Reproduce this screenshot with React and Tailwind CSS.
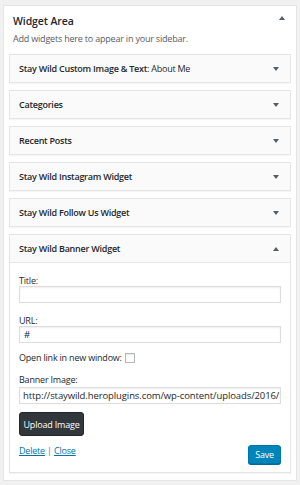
const widgets = [
  { title: 'Stay Wild Custom Image & Text', sub: 'About Me' },
  { title: 'Categories' },
  { title: 'Recent Posts' },
  { title: 'Stay Wild Instagram Widget' },
  { title: 'Stay Wild Follow Us Widget' },
];

function Arrow({ up }) {
  return (
    <svg width="6" height="4" viewBox="0 0 6 4" className="shrink-0">
      {up ? <path d="M0 4 L3 0 L6 4 Z" fill="#555d66" /> : <path d="M0 0 L6 0 L3 4 Z" fill="#555d66" />}
    </svg>
  );
}

function WidgetHeader({ title, sub, up }) {
  return (
    <div className="h-[27px] flex items-center justify-between pl-[9px] pr-[11px] bg-[#fafafa]">
      <span className="text-[9px] tracking-[-0.24px] font-semibold text-[#23282d] leading-none whitespace-nowrap">
        {title}
        {sub && <span className="font-normal">: {sub}</span>}
      </span>
      <Arrow up={up} />
    </div>
  );
}

export default function App() {
  return (
    <div
      className="w-[300px] h-[485px] bg-[#f1f1f1] pt-[5px] pl-[3px]"
      style={{ fontFamily: '"Open Sans", "Liberation Sans", sans-serif' }}
    >
      <div className="w-[294px] h-[476px] bg-white border border-[#e5e5e5] px-[5px]">
        {/* Sidebar header */}
        <div className="flex items-start justify-between pl-[4px] pr-[6px] pt-[8px]">
          <h2 className="text-[10.5px] tracking-[-0.1px] leading-[14px] font-semibold text-[#23282d]">Widget Area</h2>
          <div className="pt-[2px]">
            <Arrow up />
          </div>
        </div>
        <p className="pl-[4px] mt-[5px] text-[9px] tracking-[-0.2px] leading-[12px] text-[#555d66]">
          Add widgets here to appear in your sidebar.
        </p>

        {/* Collapsed widgets */}
        <div className="mt-[9px] flex flex-col gap-[7px]">
          {widgets.map((w) => (
            <div key={w.title} className="border border-[#e5e5e5] shadow-[0_1px_1px_rgba(0,0,0,0.04)]">
              <WidgetHeader title={w.title} sub={w.sub} />
            </div>
          ))}

          {/* Expanded widget */}
          <div className="border border-[#e5e5e5] shadow-[0_1px_1px_rgba(0,0,0,0.04)]">
            <div className="border-b border-[#e5e5e5]">
              <WidgetHeader title="Stay Wild Banner Widget" up />
            </div>
            <div className="px-[9px] pt-[13px] pb-[8px] text-[9px] tracking-[-0.2px] text-[#23282d]">
              <div className="leading-[10px] h-[10px]">Title:</div>
              <div className="h-[17px] border border-[#dddddd] shadow-[inset_0_1px_2px_rgba(0,0,0,0.07)]" />

              <div className="mt-[13px] leading-[10px] h-[10px]">URL:</div>
              <div className="h-[17px] border border-[#dddddd] shadow-[inset_0_1px_2px_rgba(0,0,0,0.07)] flex items-center px-[4px] leading-none text-[9.5px] tracking-[-0.1px]">
                #
              </div>

              <div className="mt-[10px] flex items-center gap-[3px] h-[10px]">
                <span className="leading-[10px]">Open link in new window:</span>
                <span className="w-[10px] h-[10px] border border-[#b4b9be] bg-white shadow-[inset_0_1px_2px_rgba(0,0,0,0.1)]" />
              </div>

              <div className="mt-[12px] leading-[10px] h-[10px]">Banner Image:</div>
              <div className="mt-[2px] h-[17px] border border-[#dddddd] shadow-[inset_0_1px_2px_rgba(0,0,0,0.07)] flex items-center px-[3px] leading-none overflow-hidden whitespace-nowrap text-[9.5px] tracking-[-0.1px]">
                http://staywild.heroplugins.com/wp-content/uploads/2016/
              </div>

              <button className="mt-[8px] h-[24px] w-[65px] rounded-[3px] bg-[#32373c] border border-[#23282d] text-white text-[9px] tracking-[-0.2px] leading-none">
                Upload Image
              </button>

              <div className="mt-[9px] flex items-start justify-between">
                <div className="leading-[12px] text-[9px]">
                  <span className="text-[#0073aa] underline">Delete</span>
                  <span className="text-[#72777c]"> | </span>
                  <span className="text-[#0073aa] underline">Close</span>
                </div>
                <button className="h-[19px] w-[33px] rounded-[3px] bg-[#0085ba] border border-[#0073aa] text-white text-[9px] leading-none shadow-[0_1px_0_#006799]">
                  Save
                </button>
              </div>
            </div>
          </div>
        </div>
      </div>
    </div>
  );
}
